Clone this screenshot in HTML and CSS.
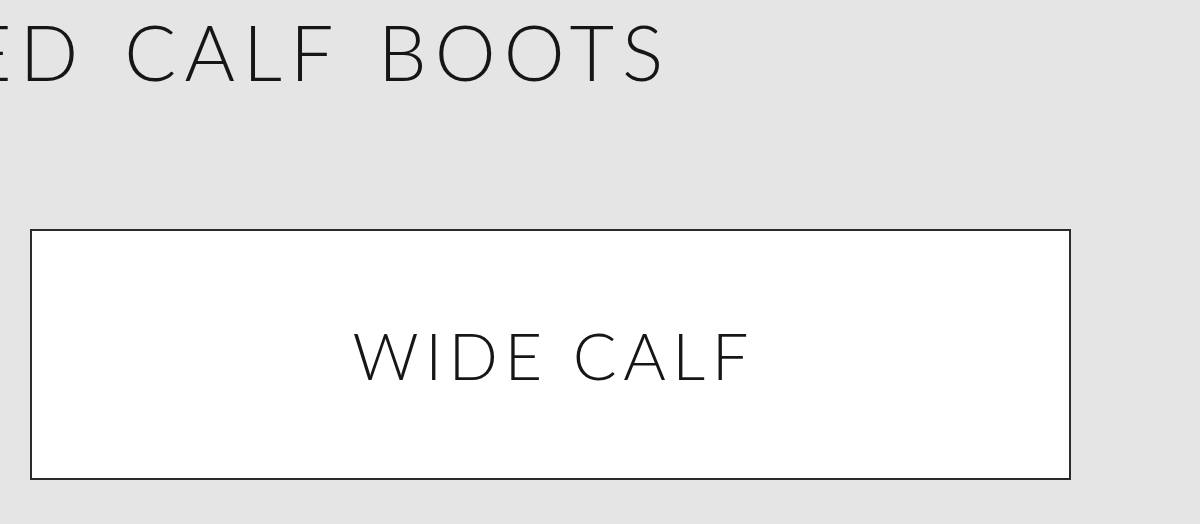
FILE: index.html
```html
<!DOCTYPE html>
<html lang="en">
<head>
    <meta charset="UTF-8">
    <meta name="viewport" content="width=device-width, initial-scale=1.0">
    <title>Calf Boots</title>
    <link rel="stylesheet" href="styles.css">
</head>
<body>
    <div class="page">
        <h1 class="title">ED CALF BOOTS</h1>
        <a class="size-btn" href="#">WIDE CALF</a>
    </div>
</body>
</html>
```

FILE: styles.css
```css
body {
    margin: 0;
    padding: 0;
    background-color: #e4e5e4;
    font-family: Lato, "Noto Sans", sans-serif;
    color: #161616;
    overflow: hidden;
}
.page {
    display: flex;
    flex-direction: column;
    align-items: flex-start;
}
/* heading runs off the left edge on purpose */
.title {
    margin: 13px 0 0 -33px;
    font-size: 77px;
    font-weight: 300;
    line-height: 1;
    letter-spacing: 0.105em;
    word-spacing: 9px;
    white-space: nowrap;
}
.size-btn {
    display: flex;
    justify-content: center;
    align-items: center;
    box-sizing: border-box;
    width: 1041px;
    height: 251px;
    margin: 139px 0 0 30px;
    padding-left: 0.1em;
    background: #fff;
    border: 2px solid #2b2b2b;
    color: #161616;
    text-decoration: none;
    font-size: 65px;
    font-weight: 300;
    letter-spacing: 0.1em;
}
```
